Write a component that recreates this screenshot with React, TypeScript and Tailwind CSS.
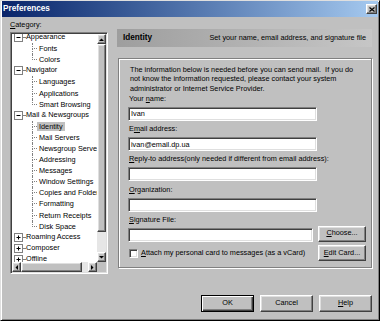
import React from "react";

const raised =
  "border border-t-white border-l-white border-r-[#404040] border-b-[#404040] shadow-[inset_-1px_-1px_0_#808080,inset_1px_1px_0_#dfdfdf]";
const sunken =
  "border border-t-[#808080] border-l-[#808080] border-r-white border-b-white shadow-[inset_1px_1px_0_#404040,inset_-1px_-1px_0_#dfdfdf]";

type Dir = "up" | "down" | "left" | "right";

const Arrow = ({ dir }: { dir: Dir }) => {
  const vertical = dir === "up" || dir === "down";
  const pts =
    dir === "up"
      ? "0,3 5,3 2.5,0.5"
      : dir === "down"
      ? "0,0 5,0 2.5,2.5"
      : dir === "left"
      ? "3,0 3,5 0.5,2.5"
      : "0,0 0,5 2.5,2.5";
  return (
    <svg width={vertical ? 5 : 3} height={vertical ? 3 : 5} viewBox={vertical ? "0 0 5 3" : "0 0 3 5"}>
      <polygon points={pts} fill="#000" />
    </svg>
  );
};

const ScrollBtn = ({ dir, className = "" }: { dir: Dir; className?: string }) => (
  <div className={`${raised} bg-[#c0c0c0] flex items-center justify-center shrink-0 ${className}`}>
    <Arrow dir={dir} />
  </div>
);

const Expander = ({ open }: { open: boolean }) => (
  <div className="w-[9px] h-[9px] border border-[#808080] bg-white flex items-center justify-center shrink-0">
    <svg width="7" height="7" viewBox="0 0 7 7">
      <path d="M1.5 3.5h4" stroke="#000" strokeWidth="1" />
      {!open && <path d="M3.5 1.5v4" stroke="#000" strokeWidth="1" />}
    </svg>
  </div>
);

const RootRow = ({ label, open }: { label: string; open: boolean }) => (
  <div className="flex items-center h-[11.1px] whitespace-nowrap">
    <div className="w-[2px] shrink-0" />
    <Expander open={open} />
    <div className="w-[2px] border-t border-dotted border-[#808080] shrink-0" />
    <span className="ml-[1px]">{label}</span>
  </div>
);

const ChildRow = ({ label, last, selected }: { label: string; last?: boolean; selected?: boolean }) => (
  <div className="flex h-[11.1px] whitespace-nowrap">
    <div className="w-[20px] shrink-0" />
    <div className="w-[5px] flex flex-col shrink-0">
      <div className="flex-1 border-l border-b border-dotted border-[#808080]" />
      <div className={`flex-1 ${last ? "" : "border-l border-dotted border-[#808080]"}`} />
    </div>
    <div className="flex items-center">
      <span className={`px-[2px] leading-[9px] ${selected ? "bg-[#c0c0c0]" : ""}`}>{label}</span>
    </div>
  </div>
);

const tree = [
  { label: "Appearance", open: true, children: ["Fonts", "Colors"] },
  { label: "Navigator", open: true, children: ["Languages", "Applications", "Smart Browsing"] },
  {
    label: "Mail & Newsgroups",
    open: true,
    children: [
      "Identity",
      "Mail Servers",
      "Newsgroup Servers",
      "Addressing",
      "Messages",
      "Window Settings",
      "Copies and Folders",
      "Formatting",
      "Return Receipts",
      "Disk Space",
    ],
  },
  { label: "Roaming Access", open: false, children: [] },
  { label: "Composer", open: false, children: [] },
  { label: "Offline", open: false, children: [] },
  { label: "Advanced", open: false, children: [] },
];

const Field = ({ label, value = "", width = "w-[189px]" }: { label: React.ReactNode; value?: string; width?: string }) => (
  <div className="mt-[3.2px] first:mt-0">
    <div className="pl-[1px] leading-[9.5px] h-[9.5px] whitespace-nowrap">{label}</div>
    <div className={`mt-[3.5px] h-[14px] ${width} bg-white ${sunken} flex items-center pl-[2px] leading-none`}>
      {value}
    </div>
  </div>
);

const Button = ({ children, className = "" }: { children: React.ReactNode; className?: string }) => (
  <div className={`${raised} bg-[#c0c0c0] flex items-center justify-center ${className}`}>{children}</div>
);

export default function App() {
  return (
    <div className="w-[380px] h-[321px] overflow-hidden bg-[#c0c0c0] border border-t-[#dfdfdf] border-l-[#dfdfdf] border-r-black border-b-black shadow-[inset_1px_1px_0_#fff,inset_-1px_-1px_0_#808080] flex flex-col font-['Liberation_Sans',Arial,sans-serif] text-[7.3px] text-black">
      {/* title bar */}
      <div className="mx-[1px] h-[16px] shrink-0 bg-gradient-to-r from-[#0a246a] to-[#a6caf0] flex items-center justify-between">
        <span className="pl-[1px] text-white font-bold text-[8.2px] leading-none">Preferences</span>
        <div className={`${raised} bg-[#c0c0c0] w-[11px] h-[10px] mr-[1px] flex items-center justify-center`}>
          <svg width="6" height="5" viewBox="0 0 6 5">
            <path d="M0.5 0.5l5 4M5.5 0.5l-5 4" stroke="#000" strokeWidth="1.2" />
          </svg>
        </div>
      </div>

      <div className="flex pl-[9px] pr-[7px] gap-[9px] shrink-0">
        {/* category tree */}
        <div className="w-[98px] flex flex-col">
          <div className="h-[15px] pt-[3px] leading-[9px]">
            <span className="underline">C</span>ategory:
          </div>
          <div className={`h-[242px] bg-white ${sunken} p-[1px] flex flex-col`}>
            <div className="flex flex-1 min-h-0">
              <div className="flex-1 overflow-hidden">
                <div className="-mt-[2px]">
                  {tree.map((n) => (
                    <div key={n.label}>
                      <RootRow label={n.label} open={n.open} />
                      {n.children.map((c, i) => (
                        <ChildRow
                          key={c}
                          label={c}
                          last={i === n.children.length - 1}
                          selected={c === "Identity"}
                        />
                      ))}
                    </div>
                  ))}
                </div>
              </div>
              <div className="w-[9px] flex flex-col">
                <ScrollBtn dir="up" className="h-[10px]" />
                <div className={`${raised} bg-[#c0c0c0] h-[188px]`} />
                <div className="flex-1 bg-[#e6e6e6]" />
                <ScrollBtn dir="down" className="h-[10px]" />
              </div>
            </div>
            <div className="flex h-[10px] shrink-0">
              <ScrollBtn dir="left" className="w-[9px]" />
              <div className={`${raised} bg-[#c0c0c0] w-[61px]`} />
              <div className="flex-1 bg-[#e6e6e6]" />
              <ScrollBtn dir="right" className="w-[9px]" />
              <div className="w-[9px] bg-[#c0c0c0]" />
            </div>
          </div>
        </div>

        {/* right panel */}
        <div className="w-[255px] mt-[12px] flex flex-col">
          <div className="h-[18px] bg-gradient-to-r from-[#9e9e9e] to-[#c6c6c6] flex items-center justify-between pl-[6px] pr-[6px]">
            <span className="font-bold text-[8.2px]">Identity</span>
            <span>Set your name, email address, and signature file</span>
          </div>

          <div className="mt-[11px] ml-[1px] h-[210px] border border-[#808080] shadow-[inset_1px_1px_0_#fff,1px_1px_0_#fff] pt-[5.5px] pl-[9px] pr-[5px]">
            <p className="pl-[2px] leading-[9.5px] whitespace-pre">
              {"The information below is needed before you can send mail.  If you do\nnot know the information requested, please contact your system\nadministrator or Internet Service Provider."}
            </p>
            <div className="mt-[1px]">
              <Field
                label={
                  <>
                    Your <span className="underline">n</span>ame:
                  </>
                }
                value="Ivan"
              />
              <Field
                label={
                  <>
                    E<span className="underline">m</span>ail address:
                  </>
                }
                value="ivan@email.dp.ua"
              />
              <Field
                label={
                  <>
                    <span className="underline">R</span>eply-to address(only needed if different from email address):
                  </>
                }
              />
              <Field
                label={
                  <>
                    <span className="underline">O</span>rganization:
                  </>
                }
              />
              <div className="mt-[3.2px]">
                <div className="pl-[1px] leading-[9.5px] h-[9.5px]">
                  <span className="underline">S</span>ignature File:
                </div>
                <div className="flex items-end justify-between">
                  <div className={`mt-[3.5px] h-[14px] w-[185px] bg-white ${sunken}`} />
                  <Button className="w-[48px] h-[16px]">
                    <span>
                      <span className="underline">C</span>hoose...
                    </span>
                  </Button>
                </div>
              </div>
              <div className="mt-[3.5px] flex items-center justify-between">
                <div className="flex items-center pl-[1px]">
                  <div className={`w-[9px] h-[9px] bg-white ${sunken}`} />
                  <span className="ml-[3px] whitespace-nowrap">
                    <span className="underline">A</span>ttach my personal card to messages (as a vCard)
                  </span>
                </div>
                <Button className="w-[48px] h-[16px]">
                  <span>
                    <span className="underline">E</span>dit Card...
                  </span>
                </Button>
              </div>
            </div>
          </div>
        </div>
      </div>

      {/* dialog buttons */}
      <div className="mt-[21px] pr-[7px] flex justify-end gap-[6px]">
        <div className="w-[53px] h-[17px] border border-black bg-[#c0c0c0] shadow-[inset_1px_1px_0_#fff,inset_-1px_-1px_0_#404040,inset_-2px_-2px_0_#808080] flex items-center justify-center">
          OK
        </div>
        <Button className="w-[53px] h-[17px]">Cancel</Button>
        <Button className="w-[53px] h-[17px]">
          <span>
            <span className="underline">H</span>elp
          </span>
        </Button>
      </div>
    </div>
  );
}
